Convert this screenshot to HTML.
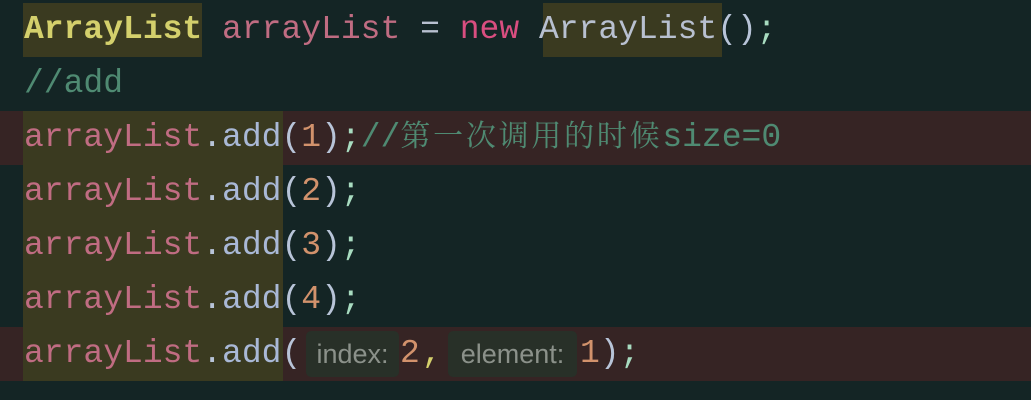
<!DOCTYPE html><html><head><meta charset="utf-8"><style>
body{margin:0;width:1031px;height:400px;background:#142525;overflow:hidden;position:relative;font-family:"Liberation Mono",monospace;font-size:33px}
.l{position:absolute;left:0;width:1031px;height:54px;line-height:54px;white-space:pre}
.r{background:#362424}
.t{position:absolute;left:24px;top:0}
.a{position:absolute;top:0}
.hl{position:absolute;background:#3a3a20}
.y{color:#d4d06c;font-weight:bold}.p{color:#c06c82}.k{color:#d94e80}.c{color:#4f8a72}.b{color:#a9b8d6}.n{color:#d2926c}.w{color:#b8c4d8}.s{color:#a8dcc0}.o{color:#b8c0d0}
.cj{font-family:"Noto Serif CJK SC","Noto Sans CJK SC",serif;font-size:30px;letter-spacing:2.75px;line-height:0}
.h{font-family:"Liberation Sans",sans-serif;font-size:27px;color:#8b918a;background:#283028;border-radius:5px;height:46px;line-height:46px;top:4px;text-align:center;box-sizing:border-box}
</style></head><body>
<div class="hl" style="left:23px;top:3px;width:179px;height:54px"></div>
<div class="hl" style="left:543px;top:3px;width:179px;height:54px"></div>
<div class="l r" style="top:111px"></div>
<div class="l r" style="top:327px"></div>
<div class="hl" style="left:23px;top:111px;width:260px;height:270px"></div>
<div class="l" style="top:3px"><span class="t"><span class="y">ArrayList</span> <span class="p">arrayList</span> <span class="o">=</span> <span class="k">new</span> <span class="o">ArrayList</span><span class="w">()</span><span class="s">;</span></span></div>
<div class="l" style="top:57px"><span class="t c">//add</span></div>
<div class="l" style="top:111px"><span class="t"><span class="p">arrayList</span><span class="w">.</span><span class="b">add</span><span class="w">(</span><span class="n">1</span><span class="w">)</span><span class="s">;</span><span class="c">//</span><span class="c cj">第一次调用的时候</span><span class="c">size=0</span></span></div>
<div class="l" style="top:165px"><span class="t"><span class="p">arrayList</span><span class="w">.</span><span class="b">add</span><span class="w">(</span><span class="n">2</span><span class="w">)</span><span class="s">;</span></span></div>
<div class="l" style="top:219px"><span class="t"><span class="p">arrayList</span><span class="w">.</span><span class="b">add</span><span class="w">(</span><span class="n">3</span><span class="w">)</span><span class="s">;</span></span></div>
<div class="l" style="top:273px"><span class="t"><span class="p">arrayList</span><span class="w">.</span><span class="b">add</span><span class="w">(</span><span class="n">4</span><span class="w">)</span><span class="s">;</span></span></div>
<div class="l" style="top:327px"><span class="t"><span class="p">arrayList</span><span class="w">.</span><span class="b">add</span><span class="w">(</span></span><span class="a h" style="left:306px;width:93px">index:</span><span class="a n" style="left:400px">2</span><span class="a" style="left:422px;color:#d4d06c">,</span><span class="a h" style="left:448px;width:129px">element:</span><span class="a" style="left:580px"><span class="n">1</span><span class="w">)</span><span class="s">;</span></span></div>
</body></html>
